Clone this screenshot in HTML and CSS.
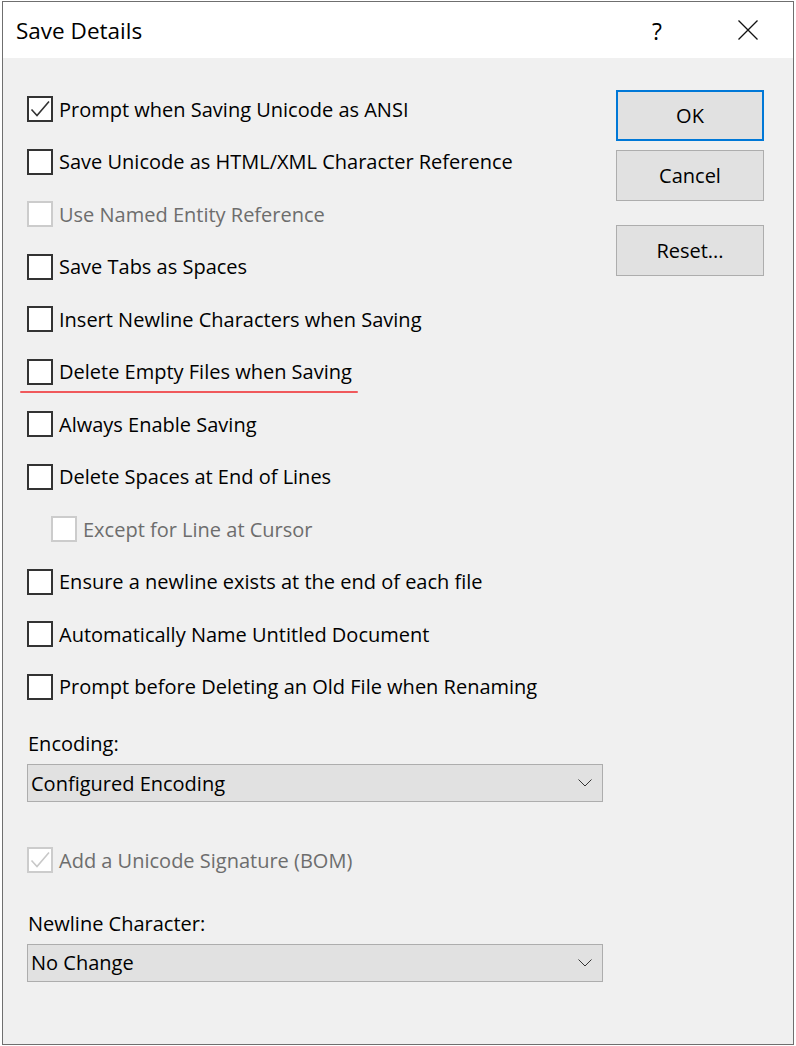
FILE: index.html
```html
<!DOCTYPE html>
<html>
<head>
<meta charset="utf-8">
<link rel="stylesheet" href="styles.css">
</head>
<body>
<div class="window">
  <div class="titlebar">
    <span class="title">Save Details</span>
    <span class="help">?</span>
    <span class="close">
      <svg width="20" height="20" viewBox="0 0 20 20"><path d="M0.5 0.5 L19.5 19.5 M19.5 0.5 L0.5 19.5" stroke="#111" stroke-width="1.3" fill="none"/></svg>
    </span>
  </div>
  <div class="content">
    <div class="options">
      <div class="row"><span class="box checked"><svg width="22" height="22" viewBox="0 0 22 22"><polyline points="2.5,11.5 8,17.5 20,3.5" fill="none" stroke="#333" stroke-width="1.6"/></svg></span><span class="label">Prompt when Saving Unicode as ANSI</span></div>
      <div class="row"><span class="box"></span><span class="label">Save Unicode as HTML/XML Character Reference</span></div>
      <div class="row disabled"><span class="box"></span><span class="label">Use Named Entity Reference</span></div>
      <div class="row"><span class="box"></span><span class="label">Save Tabs as Spaces</span></div>
      <div class="row"><span class="box"></span><span class="label">Insert Newline Characters when Saving</span></div>
      <div class="row marked"><span class="box"></span><span class="label">Delete Empty Files when Saving</span></div>
      <div class="row"><span class="box"></span><span class="label">Always Enable Saving</span></div>
      <div class="row"><span class="box"></span><span class="label">Delete Spaces at End of Lines</span></div>
      <div class="row disabled indent"><span class="box"></span><span class="label">Except for Line at Cursor</span></div>
      <div class="row"><span class="box"></span><span class="label">Ensure a newline exists at the end of each file</span></div>
      <div class="row"><span class="box"></span><span class="label">Automatically Name Untitled Document</span></div>
      <div class="row"><span class="box"></span><span class="label">Prompt before Deleting an Old File when Renaming</span></div>

      <div class="field-label first">Encoding:</div>
      <div class="select"><span>Configured Encoding</span><svg class="chev" width="14" height="8" viewBox="0 0 14 8"><polyline points="0.5,0.5 7,7 13.5,0.5" fill="none" stroke="#333" stroke-width="1"/></svg></div>

      <div class="row disabled bom"><span class="box checked"><svg width="22" height="22" viewBox="0 0 22 22"><polyline points="2.5,11.5 8,17.5 20,3.5" fill="none" stroke="#c8c8c8" stroke-width="1.6"/></svg></span><span class="label">Add a Unicode Signature (BOM)</span></div>

      <div class="field-label second">Newline Character:</div>
      <div class="select"><span>No Change</span><svg class="chev" width="14" height="8" viewBox="0 0 14 8"><polyline points="0.5,0.5 7,7 13.5,0.5" fill="none" stroke="#333" stroke-width="1"/></svg></div>
    </div>
    <div class="buttons">
      <div class="btn default">OK</div>
      <div class="btn">Cancel</div>
      <div class="btn reset">Reset...</div>
    </div>
  </div>
</div>
</body>
</html>
```

FILE: styles.css
```css
html, body {
  margin: 0;
  padding: 0;
  background: #ffffff;
}
body {
  width: 796px;
  height: 1046px;
  overflow: hidden;
  font-family: "Open Sans", "Noto Sans", sans-serif;
  font-size: 20px;
  color: #000;
}
.window {
  margin: 1px 0 0 2px;
  width: 790px;
  height: 1042px;
  border: 1px solid #6f6f6f;
  background: #f0f0f0;
  display: flex;
  flex-direction: column;
}
.titlebar {
  height: 56px;
  background: #ffffff;
  display: flex;
  align-items: center;
  flex-shrink: 0;
}
.title {
  margin-left: 13px;
  font-size: 22.5px;
  flex: 1;
  padding-top: 1px;
}
.help {
  font-size: 23px;
  width: 20px;
  text-align: center;
  margin-right: 71px;
  padding-top: 1px;
}
.close {
  width: 20px;
  height: 20px;
  margin-right: 35px;
  display: flex;
}
.content {
  display: flex;
  padding: 25px 0 0 24px;
}
.options {
  width: 576px;
  display: flex;
  flex-direction: column;
}
.row {
  height: 52.5px;
  display: flex;
  align-items: center;
  position: relative;
}
.box {
  width: 22px;
  height: 22px;
  border: 2px solid #333;
  background: #fff;
  flex-shrink: 0;
  display: flex;
}
.label {
  margin-left: 6px;
  white-space: nowrap;
}
.disabled .box {
  border-color: #cccccc;
}
.disabled .label {
  color: #6d6d6d;
}
.indent {
  padding-left: 24px;
}
.marked::after {
  content: "";
  position: absolute;
  left: -7px;
  width: 338px;
  top: 45px;
  height: 2px;
  background: #f0595c;
  border-radius: 1px;
}
.field-label {
  height: 28px;
  line-height: 28px;
  padding-left: 1px;
}
.field-label.first {
  margin-top: 17px;
  margin-bottom: 6px;
}
.field-label.second {
  margin-top: 23px;
  margin-bottom: 6px;
}
.select {
  height: 36px;
  border: 1px solid #adadad;
  background: #e1e1e1;
  display: flex;
  align-items: center;
  justify-content: space-between;
  padding: 0 10px 0 3px;
}
.bom {
  margin-top: 32px;
}
.buttons {
  margin-left: 13px;
  padding-top: 7px;
  display: flex;
  flex-direction: column;
}
.btn {
  width: 146px;
  height: 49px;
  border: 1px solid #adadad;
  background: #e1e1e1;
  display: flex;
  align-items: center;
  justify-content: center;
}
.btn.default {
  border: 2px solid #0078d7;
  width: 144px;
  height: 47px;
}
.btn + .btn {
  margin-top: 9px;
}
.btn.reset {
  margin-top: 24px;
}
```
